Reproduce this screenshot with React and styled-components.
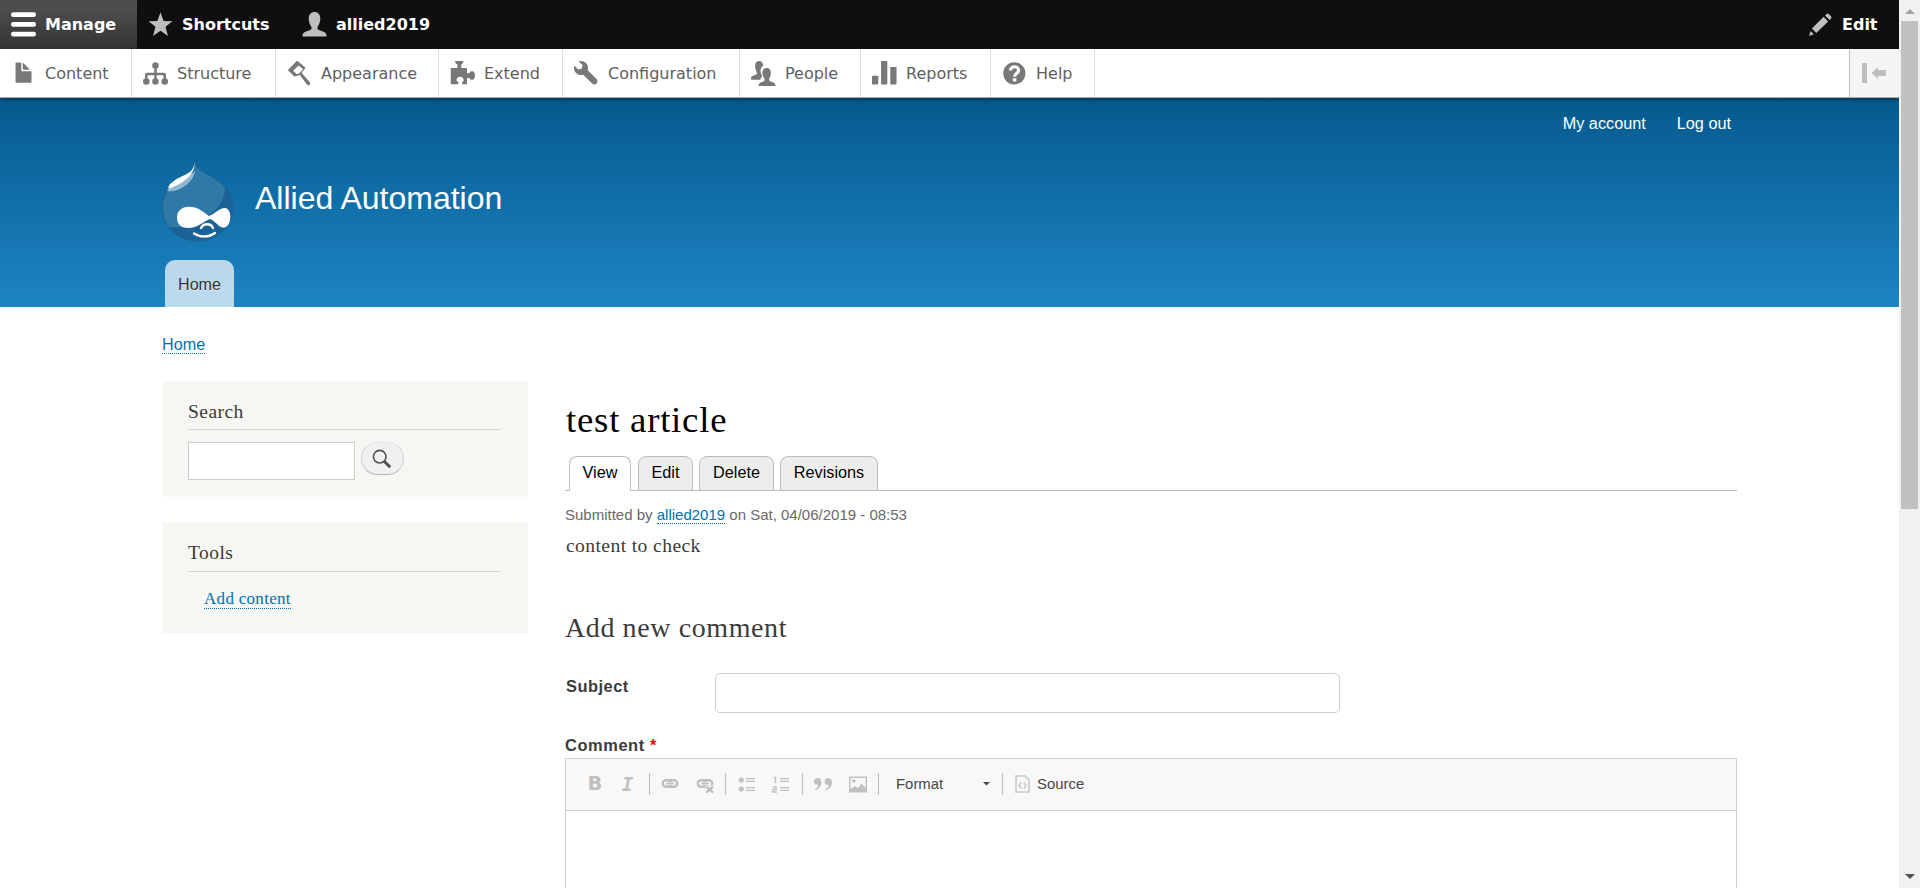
import React from 'react';
import styled, { createGlobalStyle } from 'styled-components';

const SANS = '"Liberation Sans", Arial, sans-serif';
const SERIF = 'Georgia, "Liberation Serif", serif';
const ADMIN = '"DejaVu Sans", Verdana, sans-serif';

const Global = createGlobalStyle`
  *, *::before, *::after { box-sizing: border-box; }
  body { margin: 0; background: #fff; color: #3b3b3b; font-family: ${SANS}; overflow: hidden; }
  h1, h2, p { margin: 0; font-weight: normal; }
  a { color: #0071b3; text-decoration: none; }
`;

const Screen = styled.div`
  display: flex;
  height: 888px;
  overflow: hidden;
`;

const Page = styled.div`
  flex: 1;
  min-width: 0;
  height: 888px;
  overflow: hidden;
`;

/* ---------- Admin toolbar ---------- */

const AdminBar = styled.nav`
  display: flex;
  height: 49px;
  background: #0f0f0f;
`;

const AdminTab = styled.a`
  display: flex;
  align-items: center;
  width: ${(p) => p.$width}px;
  padding-left: ${(p) => p.$pad ?? 11}px;
  color: #fff;
  font: bold 16px ${ADMIN};
  white-space: nowrap;
  background: ${(p) => (p.$active ? 'linear-gradient(#4d4d4d 20%, #333)' : 'none')};
  ${(p) => p.$end && 'margin-left: auto;'}
  svg { flex: none; margin-right: 9px; }
`;

const Tray = styled.nav`
  display: flex;
  position: relative;
  height: 49px;
  background: #fff;
  border-bottom: 1px solid #aaa;
  box-shadow: 0 2px 4px rgba(0, 0, 0, 0.4);
`;

const TrayItem = styled.a`
  display: flex;
  align-items: center;
  width: ${(p) => p.$width}px;
  padding-left: 11px;
  border-right: 1px solid #ddd;
  color: #606060;
  font: 16px ${ADMIN};
  white-space: nowrap;
  svg { flex: none; margin-right: 9px; }
`;

const TrayToggle = styled.div`
  display: flex;
  align-items: center;
  width: 50px;
  margin-left: auto;
  padding-left: 12px;
  border-left: 1px solid #c2c2c2;
  background: #f5f5f5;
`;

/* ---------- Site header ---------- */

const Header = styled.header`
  display: flex;
  flex-direction: column;
  height: 209px;
  padding-left: 161px;
  background: linear-gradient(#055a8e, #1d84c3);
`;

const AccountMenu = styled.nav`
  display: flex;
  justify-content: flex-end;
  gap: 31px;
  padding: 16px 168px 0 0;
  font-size: 16.26px;
  line-height: 19px;
  a { color: #fff; }
`;

const Branding = styled.div`
  display: flex;
  margin-top: 28px;
  height: 82px;
`;

const SiteName = styled.div`
  margin: 19px 0 0 22px;
  color: #fff;
  font-size: 32px;
  line-height: 36px;
`;

const MainTab = styled.a`
  width: 69px;
  height: 47px;
  margin: auto 0 0 4px;
  border-radius: 10px 10px 0 0;
  background: rgba(255, 255, 255, 0.7);
  font-size: 16.1px;
  line-height: 49px;
  text-align: center;
  text-shadow: 0 1px #eee;
  && { color: #333; }
`;

/* ---------- Body ---------- */

const Breadcrumb = styled.div`
  height: 74px;
  padding: 27px 0 0 162px;
  font-size: 16.2px;
  line-height: 20px;
  a { line-height: 17px; }
`;

const Link = styled.a`
  display: inline-block;
  line-height: 19px;
  border-bottom: 1px dotted #0071b3;
`;

const Columns = styled.div`
  display: flex;
  gap: 37px;
  padding-left: 162px;
`;

const Sidebar = styled.aside`
  display: flex;
  flex-direction: column;
  gap: 25px;
  width: 366px;
`;

const Block = styled.section`
  height: ${(p) => p.$height}px;
  padding: 17px 26px 0 25px;
  border: 1px solid #f9f9f9;
  background: #f6f6f2;
`;

const BlockTitle = styled.h2`
  height: ${(p) => p.$height}px;
  margin-bottom: 12px;
  border-bottom: 1px solid #d6d6d6;
  font: 19.5px/25px ${SERIF};
  letter-spacing: 0.45px;
`;

const SearchRow = styled.form`
  display: flex;
  gap: 6px;
`;

const SearchInput = styled.input`
  width: 167px;
  height: 38px;
  border: 1px solid #ccc;
  background: #fff;
`;

const SearchButton = styled.button`
  display: flex;
  align-items: center;
  justify-content: center;
  width: 43px;
  height: 33px;
  padding: 0 2px 0 0;
  border: 1px solid;
  border-color: #e4e4e4 #d2d2d2 #b4b4b4;
  border-radius: 16.5px;
  background: #f0f0f0;
`;

const ToolList = styled.div`
  padding: 5px 0 0 16px;
  font: 17px/19px ${SERIF};
  letter-spacing: 0.3px;
`;

const Main = styled.main`
  width: 1172px;
  padding-top: 15px;
`;

const Title = styled.h1`
  height: 60px;
  padding-left: 1px;
  color: #000;
  font: 36.8px/48px ${SERIF};
  letter-spacing: 0.75px;
`;

const Tabs = styled.div`
  display: flex;
  height: 35px;
  padding-left: 4px;
  border-bottom: 1px solid #bbb;
`;

const Tab = styled.a`
  height: 35px;
  width: ${(p) => p.$width}px;
  margin-right: ${(p) => (p.$active ? 7 : 6)}px;
  border: 1px solid #bbb;
  border-bottom-color: ${(p) => (p.$active ? '#fff' : '#bbb')};
  border-radius: 8px 8px 0 0;
  background: ${(p) => (p.$active ? '#fff' : '#ededed')};
  font-size: 16.26px;
  line-height: 31px;
  text-align: center;
  text-shadow: 0 1px #fff;
  && { color: #000; }
`;

const Meta = styled.p`
  padding-top: 14px;
  height: 41px;
  color: #68696b;
  font-size: 15px;
  line-height: 20px;
  a { line-height: 17px; }
`;

const Content = styled.p`
  height: 77px;
  padding-left: 1px;
  font: 19.6px/28px ${SERIF};
  letter-spacing: 0.4px;
`;

const FormTitle = styled.h2`
  height: 64px;
  font: 28px/38px ${SERIF};
  letter-spacing: 0.6px;
`;

const Label = styled.label`
  display: block;
  font: bold 16.4px/20px ${SANS};
  letter-spacing: 0.6px;
`;

const Required = styled.span`
  color: #f00;
  letter-spacing: 0;
`;

const SubjectRow = styled.div`
  display: flex;
  height: 62px;
  ${Label} { width: 150px; padding: 3px 0 0 1px; letter-spacing: 0.5px; }
`;

const SubjectInput = styled.input`
  width: 625px;
  height: 40px;
  border: 1px solid #ccc;
  border-radius: 5px;
`;

const Editor = styled.div`
  margin-top: 3px;
  height: 200px;
  border: 1px solid #d1d1d1;
  background: #fff;
`;

const EditorBar = styled.div`
  display: flex;
  align-items: center;
  height: 52px;
  padding: 0 0 2px 18px;
  border-bottom: 1px solid #d1d1d1;
  background: #f8f8f8;
  color: #484848;
  font-size: 14.9px;
`;

const ToolIcon = styled.span`
  display: flex;
  justify-content: center;
  width: ${(p) => p.$width}px;
  padding-right: ${(p) => p.$trail || 0}px;
`;

const Divider = styled.i`
  width: 1px;
  height: 22px;
  background: #bcbcbc;
`;

const FormatSelect = styled.span`
  display: flex;
  align-items: center;
  justify-content: space-between;
  width: 123px;
  padding: 0 12px 0 17px;
`;

const SourceButton = styled.span`
  display: flex;
  align-items: center;
  gap: 7px;
  padding: 1px 0 0 12px;
`;

/* ---------- Scrollbar ---------- */

const ScrollTrack = styled.div`
  display: flex;
  flex-direction: column;
  align-items: center;
  width: 21px;
  height: 888px;
  background: #f1f1f1;
`;

const ScrollThumb = styled.div`
  width: 17px;
  height: 488px;
  background: #c1c1c1;
`;

const ScrollArrow = styled.div`
  display: flex;
  height: 21px;
  padding-top: ${(p) => (p.$down ? 7 : 9)}px;
  ${(p) => p.$down && 'margin-top: auto;'}
`;

/* ---------- Icons ---------- */

const Icon = ({ children, color = '#787878', size = 25 }) => (
  <svg width={size} height={size} viewBox="0 0 16 16" fill={color}>{children}</svg>
);

const FileIcon = () => (
  <Icon>
    <g transform="translate(.1 0) scale(.93)">
      <path d="M12.502 7h-5c-.276 0-.502-.225-.502-.5v-5c0-.275-.225-.5-.5-.5h-3c-.275 0-.5.225-.5.5v13.029c0 .275.225.5.5.5h10c.275 0 .5-.225.5-.5v-7.029c0-.275-.225-.5-.498-.5z" />
      <path d="M8.502 6h4c.275 0 .34-.159.146-.354l-4.293-4.292c-.195-.195-.353-.129-.353.146v4c0 .275.225.5.5.5z" />
    </g>
  </Icon>
);
const StructureIcon = () => (
  <Icon>
    <circle cx="8" cy="2.900" r="2.100" />
    <path d="M7.200 4h1.600v3.500h4.700a1.200 1.200 0 011.200 1.200V12h-1.600V9.100H8.800V12H7.200V9.100H2.900V12H1.300V8.700a1.200 1.200 0 011.200-1.200h4.700z" />
    <circle cx="2.100" cy="13.100" r="2.100" /><circle cx="8" cy="13.100" r="2.100" /><circle cx="13.900" cy="13.100" r="2.100" />
  </Icon>
);
const AppearanceIcon = () => (
  <Icon>
    <path fillRule="evenodd" d="M6.100.2c.3-.3.600-.3.900 0l4.500 3.800c.3.300.3.600 0 .9L9.600 7.200l.1.800 4.900 5.600c.9 1.200-.8 2.700-1.800 1.500L8.200 9l-1.100.2-1.700.5c-.3.300-.6.300-.9 0L.9 6.300c-.3-.3-.3-.6 0-.9zM7.400 2.800L3.900 6.300 6.300 8.500 7.900 7.900 10.300 5.200z" />
  </Icon>
);
const ExtendIcon = () => (
  <Icon>
    <path d="M3.400 0h5v1.200L7.200 2.300V4.500h3.700v3.300h1.400l1-1.200h1.500q1.200.5 1.200 2.700t-1.200 2.700h-1.500l-1-1.200h-1.400v4H7.800v-1.400l1-1c0-1.300-1-2.300-2.300-2.300s-2.400 1-2.400 2.300l1.200 1v1.400H.5V4.500h4.200V2.300L3.400 1.200z" />
  </Icon>
);
const WrenchIcon = () => (
  <Icon>
    <path d="M14.416 11.586l-.01-.009-5.656-5.656c.15-.449.252-.921.252-1.421 0-2.485-2.016-4.5-4.502-4.5-.505 0-.981.102-1.434.255l2.431 2.431-.588 2.196-2.196.588-2.445-2.445c-.162.464-.268.956-.268 1.475 0 2.486 2.014 4.5 4.5 4.5.5 0 .972-.102 1.421-.251l5.667 5.665c.781.781 2.047.781 2.828 0s.781-2.047 0-2.828z" />
  </Icon>
);
const PeopleIcon = () => (
  <Icon>
    <path d="M2.600 3.200C2.600 1.100 3.700 0 5.200 0s2.600 1.100 2.600 3.100c-1.500.9-1.900 2.400-1.600 4.100.1 1 .5 1.800 1 2.400L5.700 12H.2c-.4-1.400 0-2.100 1.100-2.500l2-.8c.6-.3.7-1 .3-1.800C3 5.900 2.600 4.500 2.600 3.200z" />
    <path d="M7.300 7.700c0-2 1-3.200 2.700-3.200s2.700 1.200 2.700 3.200c0 1.300-.4 2.700-1 3.600-.3.800-.2 1.400.4 1.600l2.200.8c1 .4 1.500 1 1.400 2.600H4.900c-.1-1.600.3-2.200 1.300-2.600l2-.8c.6-.3.700-.9.400-1.600-.7-1-1.300-2.300-1.300-3.600z" />
  </Icon>
);
const ReportsIcon = () => (
  <Icon>
    <rect x="0" y="9.500" width="4" height="5.500" rx=".4" /><rect x="5.800" y="0" width="4" height="15" rx=".4" /><rect x="11.700" y="3.800" width="4" height="11.200" rx=".4" />
  </Icon>
);
const HelpIcon = () => (
  <Icon>
    <circle cx="7.900" cy="7.900" r="7.100" />
    <path d="M5.400 6C5.400 2.900 10.600 2.900 10.600 6c0 1.900-2.500 1.900-2.500 4" fill="none" stroke="#fff" strokeWidth="2" />
    <rect x="6.900" y="11" width="2.300" height="2.100" rx=".4" fill="#fff" />
  </Icon>
);
const MenuIcon = () => (
  <Icon color="#fff"><rect y=".2" width="16" height="3" rx="1.400" /><rect y="6.400" width="16" height="3" rx="1.400" /><rect y="12.600" width="16" height="3" rx="1.400" /></Icon>
);
const StarIcon = () => (
  <Icon color="#bebebe"><path d="M8 .2l2 5.500 5.600.2-4.400 3.500 1.600 6L8 12l-4.800 3.400 1.600-6L.4 5.900 6 5.700z" /></Icon>
);
const PersonIcon = () => (
  <Icon color="#bebebe"><path d="M4.300 4.200C4.300 1.500 5.800 0 8 0s3.700 1.500 3.700 4.200c0 1.800-.6 3.700-1.500 4.900-.7 1.200-.3 2 .6 2.400l3 1.100c1.400.6 2 1.200 1.900 3H.3c0-1.800.5-2.400 1.900-3l3-1.100c.9-.4 1.300-1.200.6-2.400C4.900 7.900 4.300 6 4.300 4.200z" /></Icon>
);
const PencilIcon = () => (
  <Icon color="#bebebe"><path d="M11.700 1.400c.6-.6 1.200-.5 1.700 0l1.200 1.200c.5.6.5 1.100 0 1.700l-.8.800-2.900-2.900zM10 3.100L12.900 6l-7.600 7.400-2.800-2.800zM1.700 12.200l2 2L.7 15.300z" /></Icon>
);
const CollapseIcon = () => (
  <svg width="26" height="26" viewBox="0 0 26 26" fill="#bebebe">
    <rect x="0" y="3" width="5" height="20" rx=".5" /><path d="M9.500 13l6.500-6v3h7q1 0 1 1v4q0 1-1 1h-7v3z" />
  </svg>
);
const SearchIcon = () => (
  <svg width="20" height="20" viewBox="0 0 20 20" fill="none" stroke="#505050">
    <circle cx="7.700" cy="7.700" r="6.300" strokeWidth="1.600" /><path d="M12.200 12.200l6 6" strokeWidth="3" />
  </svg>
);
const Logo = () => (
  <svg width="72" height="82" viewBox="0 0 72 82">
    <path d="M34 1c1 6 6 8.500 12 12 13 7 25.500 15 25.500 33 0 20-16 34-35 34S1.500 66 1.500 46c0-11 6-20 13-25C24 15 34 12 34 1z" fill="#2f79a9" stroke="#20618e" />
    <path d="M63.500 24c6 6 8 14 8 23 0 20-16 33-35 33C24 80 13 74 7.500 66c14 1 29-1 38-11 10-5 20-16 18-31z" fill="#1b6396" />
    <path d="M6 30c10 2 26-7 28-20C28 17 10 20 6 30z" fill="#8fb9d3" />
    <path d="M33.500 1c1 12-10 21-25 26.500-2-1-1-4 5-8C23 13 33 13 33.500 1z" fill="#fff" />
    <path d="M16 57c0-8 6-12 14-11 8 0 13 6 18 9 6-2 10-8 16-8 5 1 6 7 5 12-1 6-5 9-9 7-4-2-6-6-11-8-6 2-12 9-22 9-7 0-11-4-11-10z" fill="#fff" />
    <path d="M40 67c2.500-5 10-5 12 0" fill="none" stroke="#fff" strokeWidth="2.300" strokeLinecap="round" />
    <path d="M33 72.500c6 4 15 4 21-.5" fill="none" stroke="#fff" strokeWidth="2.300" strokeLinecap="round" />
  </svg>
);

const Glyph = styled.span`
  color: #c0c0c0;
  font: ${(p) => (p.$italic ? 'italic bold 19px/20px "DejaVu Sans Mono"' : 'bold 19.5px/20px "DejaVu Sans"')}, sans-serif;
`;
const Gray = ({ w = 18, h = 18, children }) => (
  <svg width={w} height={h} viewBox={`0 0 ${w} ${h}`} fill="#c0c0c0">{children}</svg>
);
const chain = (
  <g fill="none" stroke="#c0c0c0" strokeWidth="2.400">
    <path d="M8.200 7V5.200H5a3.300 3.300 0 000 6.600h3.200V10M9.800 7V5.200H13a3.300 3.300 0 010 6.600H9.800V10" />
    <path d="M5.200 8.500h7.600" strokeWidth="1.800" />
  </g>
);
const LinkIcon = () => <Gray>{chain}</Gray>;
const UnlinkIcon = () => (
  <Gray><g>{chain}</g><path d="M9.500 10.500H18V18H9.500z" fill="#f8f8f8" /><path d="M10.500 11.500l6.500 6M17 11.500l-6.500 6" stroke="#b8b8b8" strokeWidth="2.200" /></Gray>
);
const ListLines = () => (
  <path d="M8 3h9v1.300H8zM8 5.700h9V7H8zM8 12h9v1.300H8zM8 14.700h9V16H8z" />
);
const BulletIcon = () => (
  <Gray><circle cx="3.300" cy="5" r="2.600" /><circle cx="3.300" cy="14" r="2.600" /><ListLines /></Gray>
);
const NumberIcon = () => (
  <Gray>
    <ListLines />
    <path d="M1.500 2.500h2V8M1 12h3v2.500H1V17h4" fill="none" stroke="#c0c0c0" strokeWidth="1.500" />
  </Gray>
);
const QuoteIcon = () => (
  <Gray><path d="M0 6.500C0 4.300 1.500 3 3.700 3 6 3 7.500 4.700 7.500 7.300c0 3.700-2.500 6.700-6 8.200l-.5-1c2-1.200 3.200-2.800 3.300-4.700C1.500 10.200 0 8.700 0 6.500zM10.500 6.500c0-2.200 1.500-3.500 3.700-3.500C16.500 3 18 4.700 18 7.300c0 3.700-2.500 6.700-6 8.200l-.5-1c2-1.200 3.200-2.800 3.300-4.700-2.800.4-4.300-1.100-4.300-3.300z" /></Gray>
);
const ImageIcon = () => (
  <Gray><path fillRule="evenodd" d="M0 1.500h18v16H0zM1.500 3v11l4.500-3 3 2 3.500-4.500 4 4.500V3z" /><circle cx="4.800" cy="6" r="1.800" /></Gray>
);
const SourceIcon = () => (
  <svg width="15" height="18" viewBox="0 0 15 18" fill="none" stroke="#cacaca" strokeWidth="1.700">
    <path d="M1 1h9L14 4.800V17H1zM6.300 7.500L4 10.500l2.300 3M8.700 7.500l2.300 3-2.300 3" />
  </svg>
);

const TRAY = [
  ['Content', 132, FileIcon],
  ['Structure', 144, StructureIcon],
  ['Appearance', 163, AppearanceIcon],
  ['Extend', 124, ExtendIcon],
  ['Configuration', 177, WrenchIcon],
  ['People', 121, PeopleIcon],
  ['Reports', 130, ReportsIcon],
  ['Help', 104, HelpIcon],
];

const TABS = [['View', 62], ['Edit', 55], ['Delete', 75], ['Revisions', 98]];

export default function App() {
  return (
    <Screen>
      <Global />
      <Page>
        <AdminBar>
          <AdminTab $active $width={137}><MenuIcon />Manage</AdminTab>
          <AdminTab $width={154}><StarIcon />Shortcuts</AdminTab>
          <AdminTab $width={160}><PersonIcon />allied2019</AdminTab>
          <AdminTab $end $width={91} $pad={0}><PencilIcon />Edit</AdminTab>
        </AdminBar>
        <Tray>
          {TRAY.map(([label, width, Symbol]) => (
            <TrayItem key={label} $width={width}><Symbol />{label}</TrayItem>
          ))}
          <TrayToggle><CollapseIcon /></TrayToggle>
        </Tray>
        <Header>
          <AccountMenu><a>My account</a><a>Log out</a></AccountMenu>
          <Branding>
            <Logo />
            <SiteName>Allied Automation</SiteName>
          </Branding>
          <MainTab>Home</MainTab>
        </Header>
        <Breadcrumb><Link>Home</Link></Breadcrumb>
        <Columns>
          <Sidebar>
            <Block $height={116}>
              <BlockTitle $height={31}>Search</BlockTitle>
              <SearchRow>
                <SearchInput />
                <SearchButton type="button"><SearchIcon /></SearchButton>
              </SearchRow>
            </Block>
            <Block $height={112}>
              <BlockTitle $height={32}>Tools</BlockTitle>
              <ToolList><Link>Add content</Link></ToolList>
            </Block>
          </Sidebar>
          <Main>
            <Title>test article</Title>
            <Tabs>
              {TABS.map(([label, width], i) => (
                <Tab key={label} $width={width} $active={i === 0}>{label}</Tab>
              ))}
            </Tabs>
            <Meta>Submitted by <Link>allied2019</Link> on Sat, 04/06/2019 - 08:53</Meta>
            <Content>content to check</Content>
            <FormTitle>Add new comment</FormTitle>
            <SubjectRow>
              <Label>Subject</Label>
              <SubjectInput />
            </SubjectRow>
            <Label>Comment <Required>*</Required></Label>
            <Editor>
              <EditorBar>
                <ToolIcon $width={22}><Glyph>B</Glyph></ToolIcon>
                <ToolIcon $width={43}><Glyph $italic>I</Glyph></ToolIcon>
                <Divider />
                <ToolIcon $width={40}><LinkIcon /></ToolIcon>
                <ToolIcon $width={35} $trail={5}><UnlinkIcon /></ToolIcon>
                <Divider />
                <ToolIcon $width={41}><BulletIcon /></ToolIcon>
                <ToolIcon $width={35} $trail={7}><NumberIcon /></ToolIcon>
                <Divider />
                <ToolIcon $width={40}><QuoteIcon /></ToolIcon>
                <ToolIcon $width={35} $trail={5}><ImageIcon /></ToolIcon>
                <Divider />
                <FormatSelect>
                  Format
                  <svg width="7" height="4" fill="#484848"><path d="M0 0h7L3.500 3.500z" /></svg>
                </FormatSelect>
                <Divider />
                <SourceButton><SourceIcon />Source</SourceButton>
              </EditorBar>
            </Editor>
          </Main>
        </Columns>
      </Page>
      <ScrollTrack>
        <ScrollArrow><svg width="10" height="5" fill="#a3a3a3"><path d="M5 0l5 5H0z" /></svg></ScrollArrow>
        <ScrollThumb />
        <ScrollArrow $down><svg width="10" height="5" fill="#505050"><path d="M0 0h10L5 5z" /></svg></ScrollArrow>
      </ScrollTrack>
    </Screen>
  );
}
